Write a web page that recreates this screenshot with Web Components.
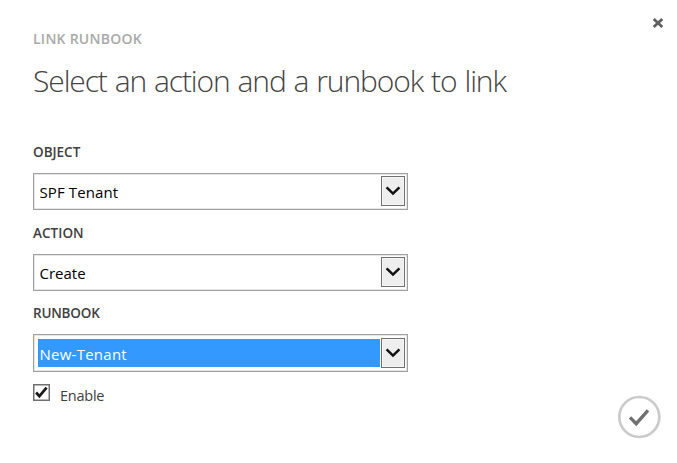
<!DOCTYPE html>
<html lang="en">
<head>
<meta charset="utf-8">
<title>Link Runbook</title>
<style>
html,body{margin:0;background:#fff}
body{font-family:"Open Sans","Noto Sans",sans-serif;width:677px;height:463px;overflow:hidden}
</style>
</head>
<body>
<link-dialog>
  <dialog-heading slot="heading" kicker="LINK RUNBOOK">Select an action and a runbook to link</dialog-heading>
  <select-field label="OBJECT" style="--label-track:0px;--value-track:.1px">SPF Tenant</select-field>
  <select-field label="ACTION" style="--label-track:.05px;--value-track:0px;--drop:1px">Create</select-field>
  <select-field label="RUNBOOK" active style="--label-track:-.2px;--value-track:.25px;--h:38px">New-Tenant</select-field>
  <check-option>Enable</check-option>
</link-dialog>
<script>
const define = (name, html) => customElements.define(name, class extends HTMLElement {
  constructor() {
    super();
    const t = document.createElement('template');
    t.innerHTML = html;
    this.attachShadow({mode: 'open'}).append(t.content.cloneNode(true));
  }
  connectedCallback() {
    this.shadowRoot.querySelectorAll('[data-attr]').forEach(e => {
      e.textContent = this.getAttribute(e.dataset.attr);
    });
  }
});

define('dialog-heading', `
<style>
:host{display:block}
.kicker{height:20px;line-height:21px;font-size:14px;font-weight:600;color:#a9a9a9;letter-spacing:.25px;white-space:nowrap}
h1{margin:12px 0 0;height:44px;line-height:41px;font-size:30px;font-weight:300;color:#444;letter-spacing:-1.1px;word-spacing:1.2px;white-space:nowrap}
</style>
<div class="kicker" data-attr="kicker"></div>
<h1><slot></slot></h1>`);

define('select-field', `
<style>
:host{display:block;width:375px}
.label{height:20px;line-height:20px;font-size:13.5px;font-weight:600;color:#404040;letter-spacing:var(--label-track);white-space:nowrap}
.box{box-sizing:border-box;height:var(--h,37px);margin-top:11px;border:1px solid #a0a0a0;box-shadow:inset 0 0 0 1px #e6e6e6;padding:3px 2px 3px 4px;display:flex;background:#fff}
.value{flex:1;display:flex;align-items:center;padding:var(--drop,0) 0 0 1.5px;font-size:15px;line-height:20px;color:#000;letter-spacing:var(--value-track);white-space:nowrap}
:host([active]) .value{background:#39f;color:#fff;margin:1px 0;padding-top:1px}
.button{box-sizing:border-box;width:24px;height:30px;margin:-1px 0 0 1px;border:1px solid #707070;background:#eee;box-shadow:inset 0 0 0 1px #f5f5f5;display:flex}
:host([active]) .button{margin-top:0}
svg{display:block}
</style>
<div class="label" data-attr="label"></div>
<div class="box"><div class="value"><slot></slot></div>
<div class="button"><svg width="22" height="28" viewBox="0 0 22 28"><path d="M4.6 10.3L11 16.6L17.4 10.3" fill="none" stroke="#111" stroke-width="2.5"/></svg></div></div>`);

define('check-option', `
<style>
:host{display:flex;height:24px;gap:10px;color:#404040;font-size:14.5px;margin-top:-1px}
svg{display:block}
span{line-height:22px;letter-spacing:-.25px;padding-top:1px}
</style>
<svg width="17" height="17" viewBox="0 0 17 17"><rect x=".75" y=".75" width="15.5" height="15.5" fill="#fff" stroke="#707070" stroke-width="1.5"/><path d="M3.1 8.5L6.4 12.2L13.6 3.6" fill="none" stroke="#1a1a1a" stroke-width="2.7"/></svg>
<span><slot></slot></span>`);

define('close-button', `
<style>:host{display:block;width:12px;height:12px}svg{display:block}</style>
<svg width="12" height="12" viewBox="0 0 12 12"><path d="M1.7 2L10.3 10M10.3 2L1.7 10" fill="none" stroke="#606060" stroke-width="2.8"/></svg>`);

define('confirm-button', `
<style>:host{display:block;width:44px;height:44px}svg{display:block}</style>
<svg width="44" height="44" viewBox="0 0 44 44"><circle cx="22.3" cy="22" r="20" fill="#fff" stroke="#cbcbcb" stroke-width="2.7"/><path d="M13 22.3L19.2 28.7L31 15.3" fill="none" stroke="#707070" stroke-width="3.3"/></svg>`);

define('link-dialog', `
<style>
:host{display:grid;grid-template-columns:1fr auto;box-sizing:border-box;width:677px;height:463px;background:#fff}
main{padding:28px 0 0 33px}
.fields{display:flex;flex-direction:column;gap:12.5px;padding-top:38px}
aside{display:flex;flex-direction:column;justify-content:space-between;align-items:flex-end;padding:17px 16px 24px 0}
close-button{margin-right:-3px}
</style>
<main><slot name="heading"></slot><div class="fields"><slot></slot></div></main>
<aside><close-button></close-button><confirm-button></confirm-button></aside>`);
</script>
</body>
</html>
